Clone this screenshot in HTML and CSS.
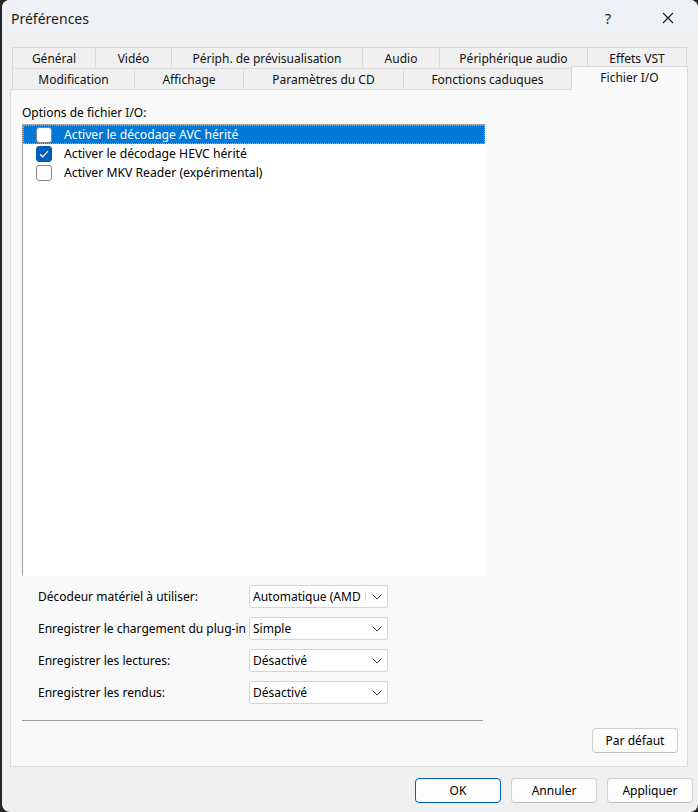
FILE: index.html
```html
<!DOCTYPE html>
<html lang="fr">
<head>
<meta charset="utf-8">
<title>Préférences</title>
<link rel="stylesheet" href="styles.css">
</head>
<body>
<div class="window">
  <div class="titlebar">
    <span class="title">Préférences</span>
    <span class="help">?</span>
    <span class="close"><svg width="12" height="12" viewBox="0 0 12 12"><path d="M1 1 L11 11 M11 1 L1 11" stroke="#1a1a1a" stroke-width="1.1" fill="none"/></svg></span>
  </div>
  <div class="content">
    <div class="tabs">
      <div class="tabrow row1">
        <div class="tab" style="width:84px">Général</div>
        <div class="tab" style="width:77px">Vidéo</div>
        <div class="tab" style="width:192px">Périph. de prévisualisation</div>
        <div class="tab" style="width:78px">Audio</div>
        <div class="tab" style="width:149px">Périphérique audio</div>
        <div class="tab" style="width:100px">Effets VST</div>
      </div>
      <div class="tabrow row2">
        <div class="tab" style="width:123px">Modification</div>
        <div class="tab" style="width:110px">Affichage</div>
        <div class="tab" style="width:161px">Paramètres du CD</div>
        <div class="tab" style="width:169px">Fonctions caduques</div>
        <div class="tab selected" style="width:117px">Fichier I/O</div>
      </div>
    </div>
    <div class="panel">
      <div class="group-label">Options de fichier I/O:</div>
      <div class="listbox">
        <div class="item active">
          <span class="cb"></span><span class="item-text">Activer le décodage AVC hérité</span>
        </div>
        <div class="item">
          <span class="cb checked"><svg width="10" height="8" viewBox="0 0 10 8"><path d="M1 4.2 L3.7 6.8 L9 1.2" stroke="#fff" stroke-width="1.2" fill="none"/></svg></span><span class="item-text">Activer le décodage HEVC hérité</span>
        </div>
        <div class="item">
          <span class="cb"></span><span class="item-text">Activer MKV Reader (expérimental)</span>
        </div>
      </div>
      <div class="form">
        <div class="form-row">
          <span class="form-label">Décodeur matériel à utiliser:</span>
          <div class="select"><span class="select-text">Automatique (AMD</span><span class="cut"></span><svg class="chev" width="10" height="6" viewBox="0 0 10 6"><path d="M0.5 0.5 L5 5 L9.5 0.5" stroke="#3a3a3a" stroke-width="1" fill="none"/></svg></div>
        </div>
        <div class="form-row">
          <span class="form-label">Enregistrer le chargement du plug-in</span>
          <div class="select"><span class="select-text">Simple</span><svg class="chev" width="10" height="6" viewBox="0 0 10 6"><path d="M0.5 0.5 L5 5 L9.5 0.5" stroke="#3a3a3a" stroke-width="1" fill="none"/></svg></div>
        </div>
        <div class="form-row">
          <span class="form-label">Enregistrer les lectures:</span>
          <div class="select"><span class="select-text">Désactivé</span><svg class="chev" width="10" height="6" viewBox="0 0 10 6"><path d="M0.5 0.5 L5 5 L9.5 0.5" stroke="#3a3a3a" stroke-width="1" fill="none"/></svg></div>
        </div>
        <div class="form-row">
          <span class="form-label">Enregistrer les rendus:</span>
          <div class="select"><span class="select-text">Désactivé</span><svg class="chev" width="10" height="6" viewBox="0 0 10 6"><path d="M0.5 0.5 L5 5 L9.5 0.5" stroke="#3a3a3a" stroke-width="1" fill="none"/></svg></div>
        </div>
      </div>
      <div class="separator"></div>
      <div class="panel-actions">
        <button class="btn">Par défaut</button>
      </div>
    </div>
    <div class="footer">
      <button class="btn default">OK</button>
      <button class="btn">Annuler</button>
      <button class="btn">Appliquer</button>
    </div>
  </div>
</div>
</body>
</html>
```
FILE: styles.css
```css
* { box-sizing: border-box; }
html, body { margin: 0; padding: 0; }
body {
  background: #262626;
  width: 698px;
  height: 812px;
  overflow: hidden;
  font-family: "Noto Sans", "Open Sans", sans-serif;
  font-size: 12px;
  color: #000;
}
.window {
  margin-left: 2px;
  width: 696px;
  height: 812px;
  background: #f0f0f0;
  border-radius: 8px;
  overflow: hidden;
  display: flex;
  flex-direction: column;
}
.titlebar {
  height: 36px;
  background: #eef2f7;
  display: flex;
  align-items: center;
  padding-left: 9px;
}
.title {
  font-size: 14px;
  flex: 1;
  color: #1a1a1a;
}
.help {
  font-size: 14px;
  width: 16px;
  text-align: center;
  margin-right: 46px;
  color: #1a1a1a;
}
.close {
  display: flex;
  width: 12px;
  margin-right: 24px;
}
.content {
  padding: 11px 0 0 8px;
  display: flex;
  flex-direction: column;
}
.tabs {
  padding-left: 2px;
  display: flex;
  flex-direction: column;
}
.tabrow {
  display: flex;
  height: 21px;
}
.tab {
  height: 22px;
  border: 1px solid #dadada;
  margin-left: -1px;
  background: #f0f0f0;
  text-align: center;
  line-height: 21px;
  white-space: nowrap;
  color: #111;
}
.tab:first-child { margin-left: 0; }
.row2 .tab { line-height: 22px; }
.tab.selected {
  height: 24px;
  margin-top: -2px;
  background: #f9f9f9;
  border-bottom: none;
  position: relative;
  z-index: 2;
  line-height: 21px;
}
.panel {
  width: 678px;
  height: 678px;
  background: #f9f9f9;
  border: 1px solid #dcdcdc;
  padding: 0 0 0 11px;
  display: flex;
  flex-direction: column;
}
.group-label {
  height: 34px;
  line-height: 20px;
  padding-top: 13px;
  white-space: nowrap;
}
.listbox {
  width: 464px;
  height: 452px;
  background: #fff;
  border-top: 1px solid #a0a0a0;
  border-left: 1px solid #a0a0a0;
  border-right: 1px solid #fff;
  border-bottom: 1px solid #fff;
  display: flex;
  flex-direction: column;
}
.item {
  height: 19px;
  display: flex;
  align-items: center;
  padding-left: 13px;
  white-space: nowrap;
}
.item.active {
  background: #0078d7;
  color: #fff;
  outline: 1px dotted #f0a040;
  outline-offset: -1px;
}
.cb {
  width: 16px;
  height: 16px;
  border: 1px solid #868686;
  border-radius: 3px;
  background: #fdfdfd;
  display: flex;
  align-items: center;
  justify-content: center;
  flex-shrink: 0;
}
.cb.checked {
  background: #005fb8;
  border-color: #005fb8;
}
.item-text {
  margin-left: 12px;
  font-size: 12.2px;
}
.form {
  display: flex;
  flex-direction: column;
  gap: 9px;
  padding-left: 16px;
  margin-top: 9px;
}
.form-row {
  display: flex;
  align-items: center;
  height: 23px;
}
.form-label {
  width: 211px;
  white-space: nowrap;
}
.select {
  width: 139px;
  height: 23px;
  background: #fff;
  border: 1px solid #d4d4d4;
  border-radius: 3px;
  display: flex;
  align-items: center;
  padding-left: 3px;
  padding-right: 4px;
}
.select-text {
  white-space: nowrap;
}
.cut {
  width: 1px;
  height: 9px;
  background: #d8d8d8;
  margin-left: 4px;
}
.chev { flex-shrink: 0; margin-left: auto; margin-right: 1px; }
.separator {
  width: 461px;
  height: 1px;
  background: #a0a0a0;
  margin-top: 16px;
}
.panel-actions {
  display: flex;
  justify-content: flex-end;
  padding-right: 9px;
  margin-top: 7px;
}
.btn {
  font-family: "Noto Sans", "Open Sans", sans-serif;
  font-size: 12px;
  color: #000;
  width: 86px;
  height: 25px;
  background: #fdfdfd;
  border: 1px solid #d0d0d0;
  border-bottom-color: #c0c0c0;
  border-radius: 4px;
  padding: 0;
}
.btn.default {
  border-color: #005fb8;
}
.footer {
  display: flex;
  justify-content: flex-end;
  gap: 10px;
  padding-right: 5px;
  margin-top: 11px;
}
```
